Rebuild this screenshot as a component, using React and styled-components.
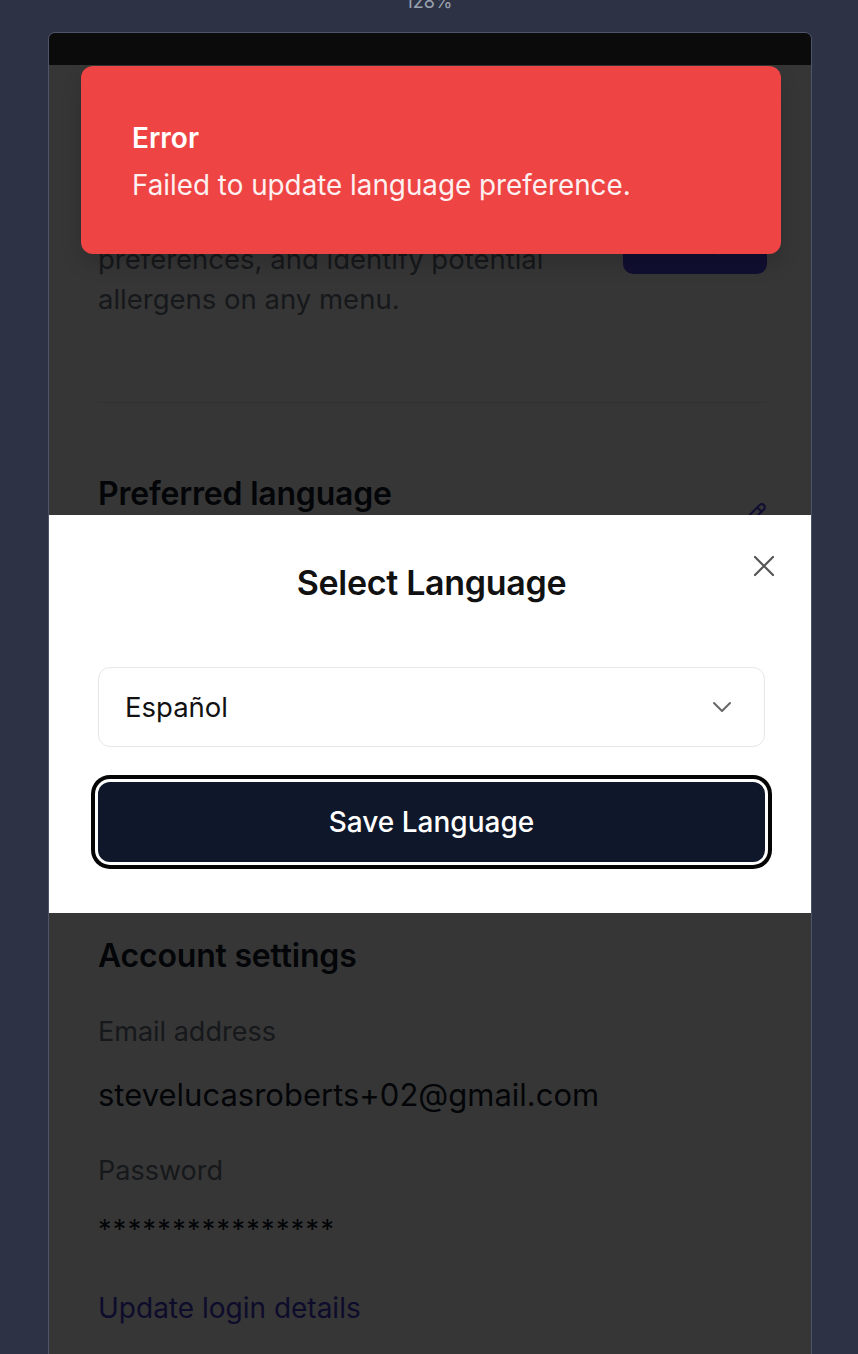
import React from 'react'
import styled, { createGlobalStyle } from 'styled-components'
import { Pencil } from 'lucide-react'

const GlobalStyle = createGlobalStyle`
  html, body {
    margin: 0;
    height: 100%;
    overflow: hidden;
    background: #2d3345;
  }
  body {
    font-family: Inter, "Noto Sans", "Liberation Sans", sans-serif;
    -webkit-font-smoothing: antialiased;
  }
  * { box-sizing: border-box; }
`

export default function App() {
  return (
    <Screen>
      <GlobalStyle />
      <ZoomLabel>128%</ZoomLabel>
      <Frame>
        <TopBar />
        <Viewport>
          <Page>
            <Section padding='82px 0 83px'>
              <Row>
                <Column>
                  <Heading>Dietary preferences</Heading>
                  <Description>
                    Set up your dietary profile, save your<br />
                    preferences, and identify potential<br />
                    allergens on any menu.
                  </Description>
                </Column>
                <PrimaryButton>Set up</PrimaryButton>
              </Row>
            </Section>
            <Divider />
            <Section padding='71px 0 204px'>
              <Row>
                <Heading>Preferred language</Heading>
                <EditButton>
                  <Pencil size={26} strokeWidth={2} />
                </EditButton>
              </Row>
              <Description>
                Menus and dish descriptions will be<br />
                translated into this language.
              </Description>
              <Value>English</Value>
            </Section>
            <Divider />
            <Section padding='67px 0 60px'>
              <Heading>Account settings</Heading>
              <Label top='38px'>Email address</Label>
              <Value top='25px'>stevelucasroberts+02@gmail.com</Value>
              <Label top='38px'>Password</Label>
              <Stars>****************</Stars>
              <Link>Update login details</Link>
            </Section>
          </Page>

          <Overlay>
            <Dialog>
              <DialogTitle>Select Language</DialogTitle>
              <CloseButton aria-label='Close'>
                <svg width='22' height='22' viewBox='0 0 22 22' fill='none'>
                  <path d='M2 2 L20 20 M20 2 L2 20' stroke='#555' strokeWidth='2.2' strokeLinecap='round' />
                </svg>
              </CloseButton>
              <SelectBox>
                <span>Español</span>
                <svg width='20' height='12' viewBox='0 0 20 12' fill='none'>
                  <path d='M2 2 L10 10 L18 2' stroke='#666' strokeWidth='2' strokeLinecap='round' strokeLinejoin='round' />
                </svg>
              </SelectBox>
              <SaveButton>Save Language</SaveButton>
            </Dialog>
          </Overlay>

          <Toast>
            <ToastTitle>Error</ToastTitle>
            <ToastText>Failed to update language preference.</ToastText>
          </Toast>
        </Viewport>
      </Frame>
    </Screen>
  )
}

const Screen = styled.div`
  width: 858px;
  height: 1354px;
  overflow: hidden;
  background: #2d3345;
`
const ZoomLabel = styled.div`
  height: 39px;
  margin-top: -7px;
  font-size: 18px;
  line-height: 18px;
  text-align: center;
  color: #9aa1ae;
`
const Frame = styled.div`
  width: 764px;
  margin-left: 48px;
  border: 1px solid #4e5568;
  border-radius: 7px 7px 0 0;
  overflow: hidden;
`
const TopBar = styled.div`
  height: 32px;
  background: #0b0b0b;
`
const Viewport = styled.div`
  position: relative;
  height: 1298px;
  background: #ffffff;
  overflow: hidden;
`
const Page = styled.div`
  padding: 0 44px 0 49px;
`
const Section = styled.div`
  padding: ${props => props.padding};
`
const Row = styled.div`
  display: flex;
  justify-content: space-between;
  align-items: flex-start;
`
const Column = styled.div`
  display: flex;
  flex-direction: column;
  gap: 12px;
`
const Heading = styled.h2`
  margin: 0;
  font-size: 32px;
  line-height: 40px;
  font-weight: 600;
  letter-spacing: -0.2px;
  color: #111827;
`
const Description = styled.p`
  margin: 0;
  font-size: 27.5px;
  line-height: 40px;
  color: #6b7280;
`
const PrimaryButton = styled.button`
  width: 144px;
  height: 64px;
  margin-top: 63px;
  border: none;
  border-radius: 10px;
  background: #4f46e5;
  color: #fff;
  font: 600 22px Inter, sans-serif;
`
const EditButton = styled.button`
  margin-top: 28px;
  padding: 0;
  border: none;
  background: none;
  color: #4f46e5;
  display: flex;
`
const Divider = styled.div`
  height: 1px;
  background: #e5e7eb;
`
const Label = styled.div`
  margin-top: ${props => props.top || '0'};
  font-size: 27px;
  line-height: 36px;
  color: #6b7280;
`
const Value = styled.div`
  margin-top: ${props => props.top || '16px'};
  font-size: 31px;
  line-height: 40px;
  color: #111827;
`
const Stars = styled.div`
  margin-top: 21px;
  font-size: 27px;
  line-height: 40px;
  letter-spacing: 1.3px;
  color: #111827;
`
const Link = styled.a`
  display: block;
  margin-top: 38px;
  font-size: 28px;
  line-height: 40px;
  color: #4338ca;
  cursor: pointer;
`
const Overlay = styled.div`
  position: absolute;
  inset: 0;
  background: rgba(0, 0, 0, 0.79);
  display: flex;
  align-items: center;
`
const Dialog = styled.div`
  position: relative;
  width: 100%;
  background: #ffffff;
  padding: 48px 46px 51px 49px;
  display: flex;
  flex-direction: column;
`
const DialogTitle = styled.h3`
  margin: 0;
  font-size: 34px;
  line-height: 40px;
  font-weight: 600;
  letter-spacing: -0.3px;
  text-align: center;
  color: #111;
`
const CloseButton = styled.button`
  position: absolute;
  top: 40px;
  right: 36px;
  padding: 0;
  border: none;
  background: none;
  display: flex;
`
const SelectBox = styled.div`
  margin-top: 64px;
  height: 80px;
  padding: 0 32px 0 26px;
  border: 1px solid #e5e7eb;
  border-radius: 12px;
  display: flex;
  align-items: center;
  justify-content: space-between;
  font-size: 27.5px;
  color: #111;
`
const SaveButton = styled.button`
  margin-top: 35px;
  height: 80px;
  border: none;
  border-radius: 12px;
  background: #0f172a;
  color: #ffffff;
  font: 500 28px Inter, "Noto Sans", sans-serif;
  box-shadow: 0 0 0 3px #ffffff, 0 0 0 7px #050505;
`
const Toast = styled.div`
  position: absolute;
  top: 1px;
  left: 32px;
  width: 700px;
  height: 188px;
  padding: 54px 51px 0;
  border-radius: 12px;
  background: #ef4444;
  color: #ffffff;
  box-shadow: 0 10px 20px rgba(0, 0, 0, 0.15);
`
const ToastTitle = styled.div`
  font-size: 28px;
  line-height: 36px;
  font-weight: 600;
`
const ToastText = styled.div`
  margin-top: 11px;
  font-size: 27.8px;
  line-height: 36px;
  opacity: 0.92;
`
